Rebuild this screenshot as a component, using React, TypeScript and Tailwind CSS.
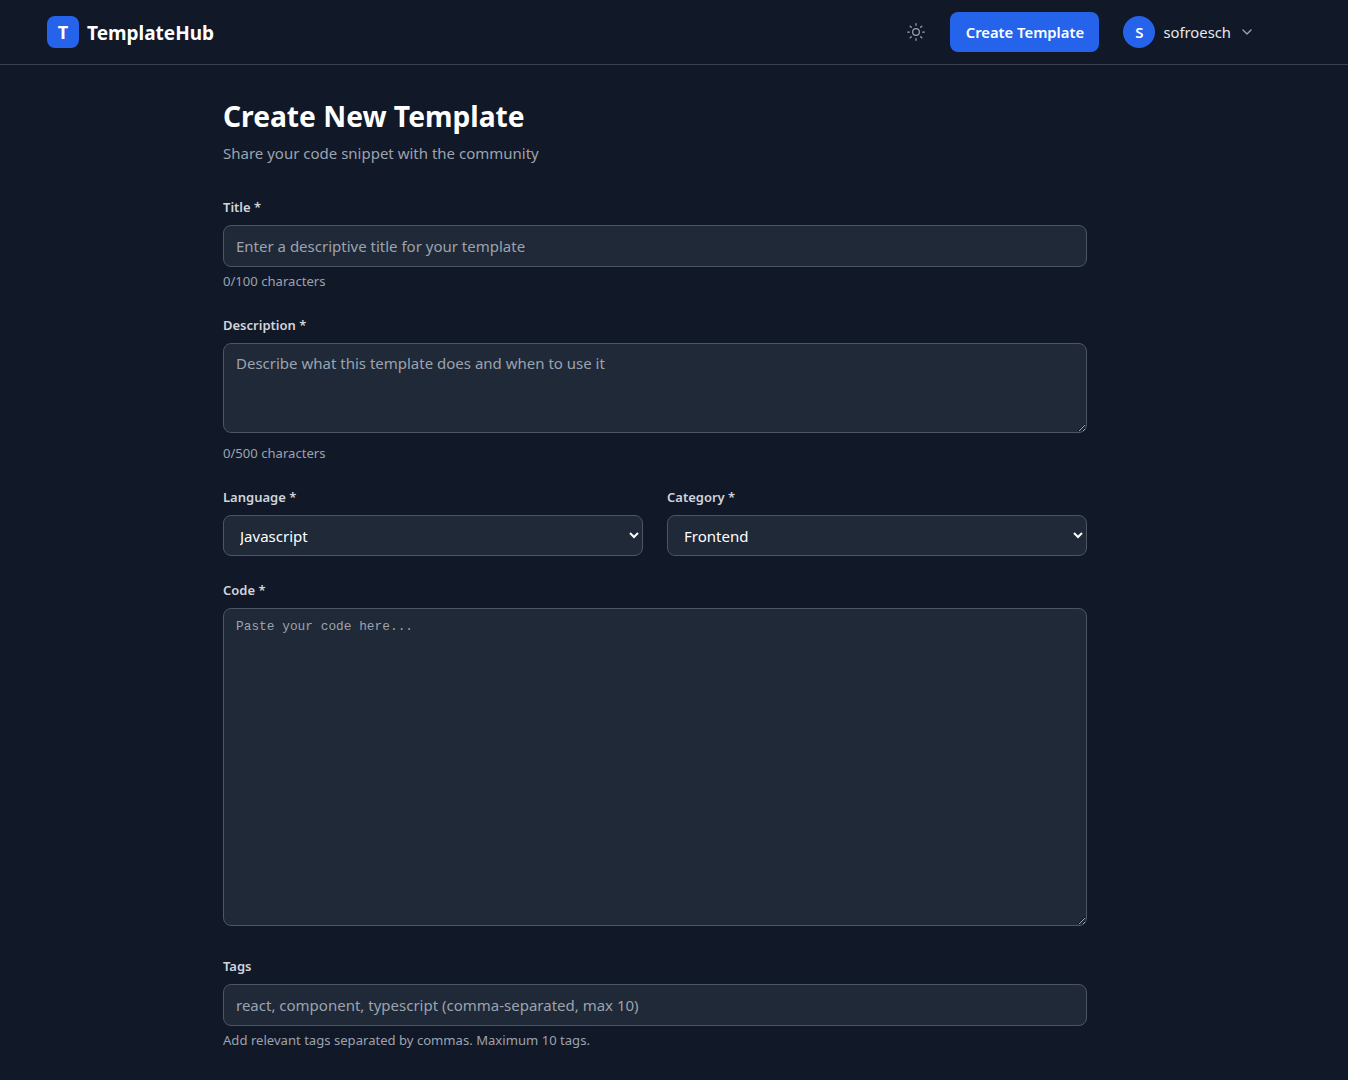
import { ChevronDown, Sun } from "lucide-react";

const labelClass = "block text-[13px] leading-5 font-semibold text-[#d1d5db] mb-2";
const fieldClass = "w-full px-3 py-2 bg-[#1f2937] border border-[#4b5563] rounded-lg text-white placeholder-[#9ca3af]";
const hintClass = "mt-1 text-[13.1px] leading-5 text-[#9ca3af]";

function Header() {
	return (
		<header className="bg-[#111827] border-b border-[#374151]">
			<div className="w-[1310px]">
				<div className="max-w-7xl mx-auto px-8 h-16 flex items-center justify-between">
					<div className="flex items-center gap-2">
						<div className="w-8 h-8 bg-[#2563eb] rounded-lg flex items-center justify-center text-white text-[18px] font-bold">T</div>
						<span className="text-[19px] font-bold text-white pt-0.5">TemplateHub</span>
					</div>
					<div className="flex items-center gap-6 pr-2">
						<Sun className="w-5 h-5 text-[#9ca3af]" strokeWidth={1.5} />
						<button className="w-[149px] h-10 bg-[#2563eb] text-white text-[14.8px] rounded-lg font-semibold">Create Template</button>
						<div className="flex items-center gap-2">
							<div className="w-8 h-8 bg-[#2563eb] rounded-full flex items-center justify-center text-white text-[15px] font-semibold">S</div>
							<span className="text-[14.8px] text-[#e5e7eb]">sofroesch</span>
							<ChevronDown className="w-4 h-4 text-[#9ca3af]" />
						</div>
					</div>
				</div>
			</div>
		</header>
	);
}

export default function App() {
	return (
		<div className="h-screen overflow-hidden bg-[#111827] font-['Noto_Sans',sans-serif]">
			<Header />
			<div className="w-[1310px]">
				<main className="max-w-4xl mx-auto px-4 py-8">
					<h1 className="text-[28.2px] leading-9 font-bold text-white mb-2 pt-px h-9">Create New Template</h1>
					<p className="text-[15px] leading-6 text-[#9ca3af] mb-8">Share your code snippet with the community</p>
					<form className="space-y-6">
						<div>
							<label className={labelClass}>Title *</label>
							<input className={`${fieldClass} h-[42px] text-[15px]`} placeholder="Enter a descriptive title for your template" />
							<p className={hintClass}>0/100 characters</p>
						</div>
						<div>
							<label className={labelClass}>Description *</label>
							<textarea className={`${fieldClass} h-[90px] text-[15px]`} placeholder="Describe what this template does and when to use it" />
							<p className={hintClass}>0/500 characters</p>
						</div>
						<div className="grid grid-cols-2 gap-6">
							<div>
								<label className={labelClass}>Language *</label>
								<select className={`${fieldClass} h-[41px] text-[15px]`} defaultValue="javascript">
									<option value="javascript">Javascript</option>
								</select>
							</div>
							<div>
								<label className={labelClass}>Category *</label>
								<select className={`${fieldClass} h-[41px] text-[15px]`} defaultValue="frontend">
									<option value="frontend">Frontend</option>
								</select>
							</div>
						</div>
						<div>
							<label className={labelClass}>Code *</label>
							<textarea className={`${fieldClass} h-[318px] font-['Liberation_Mono',monospace] text-[12.83px]`} placeholder="Paste your code here..." />
						</div>
						<div>
							<label className={labelClass}>Tags</label>
							<input className={`${fieldClass} h-[42px] text-[15px]`} placeholder="react, component, typescript (comma-separated, max 10)" />
							<p className={hintClass}>Add relevant tags separated by commas. Maximum 10 tags.</p>
						</div>
					</form>
				</main>
			</div>
		</div>
	);
}
